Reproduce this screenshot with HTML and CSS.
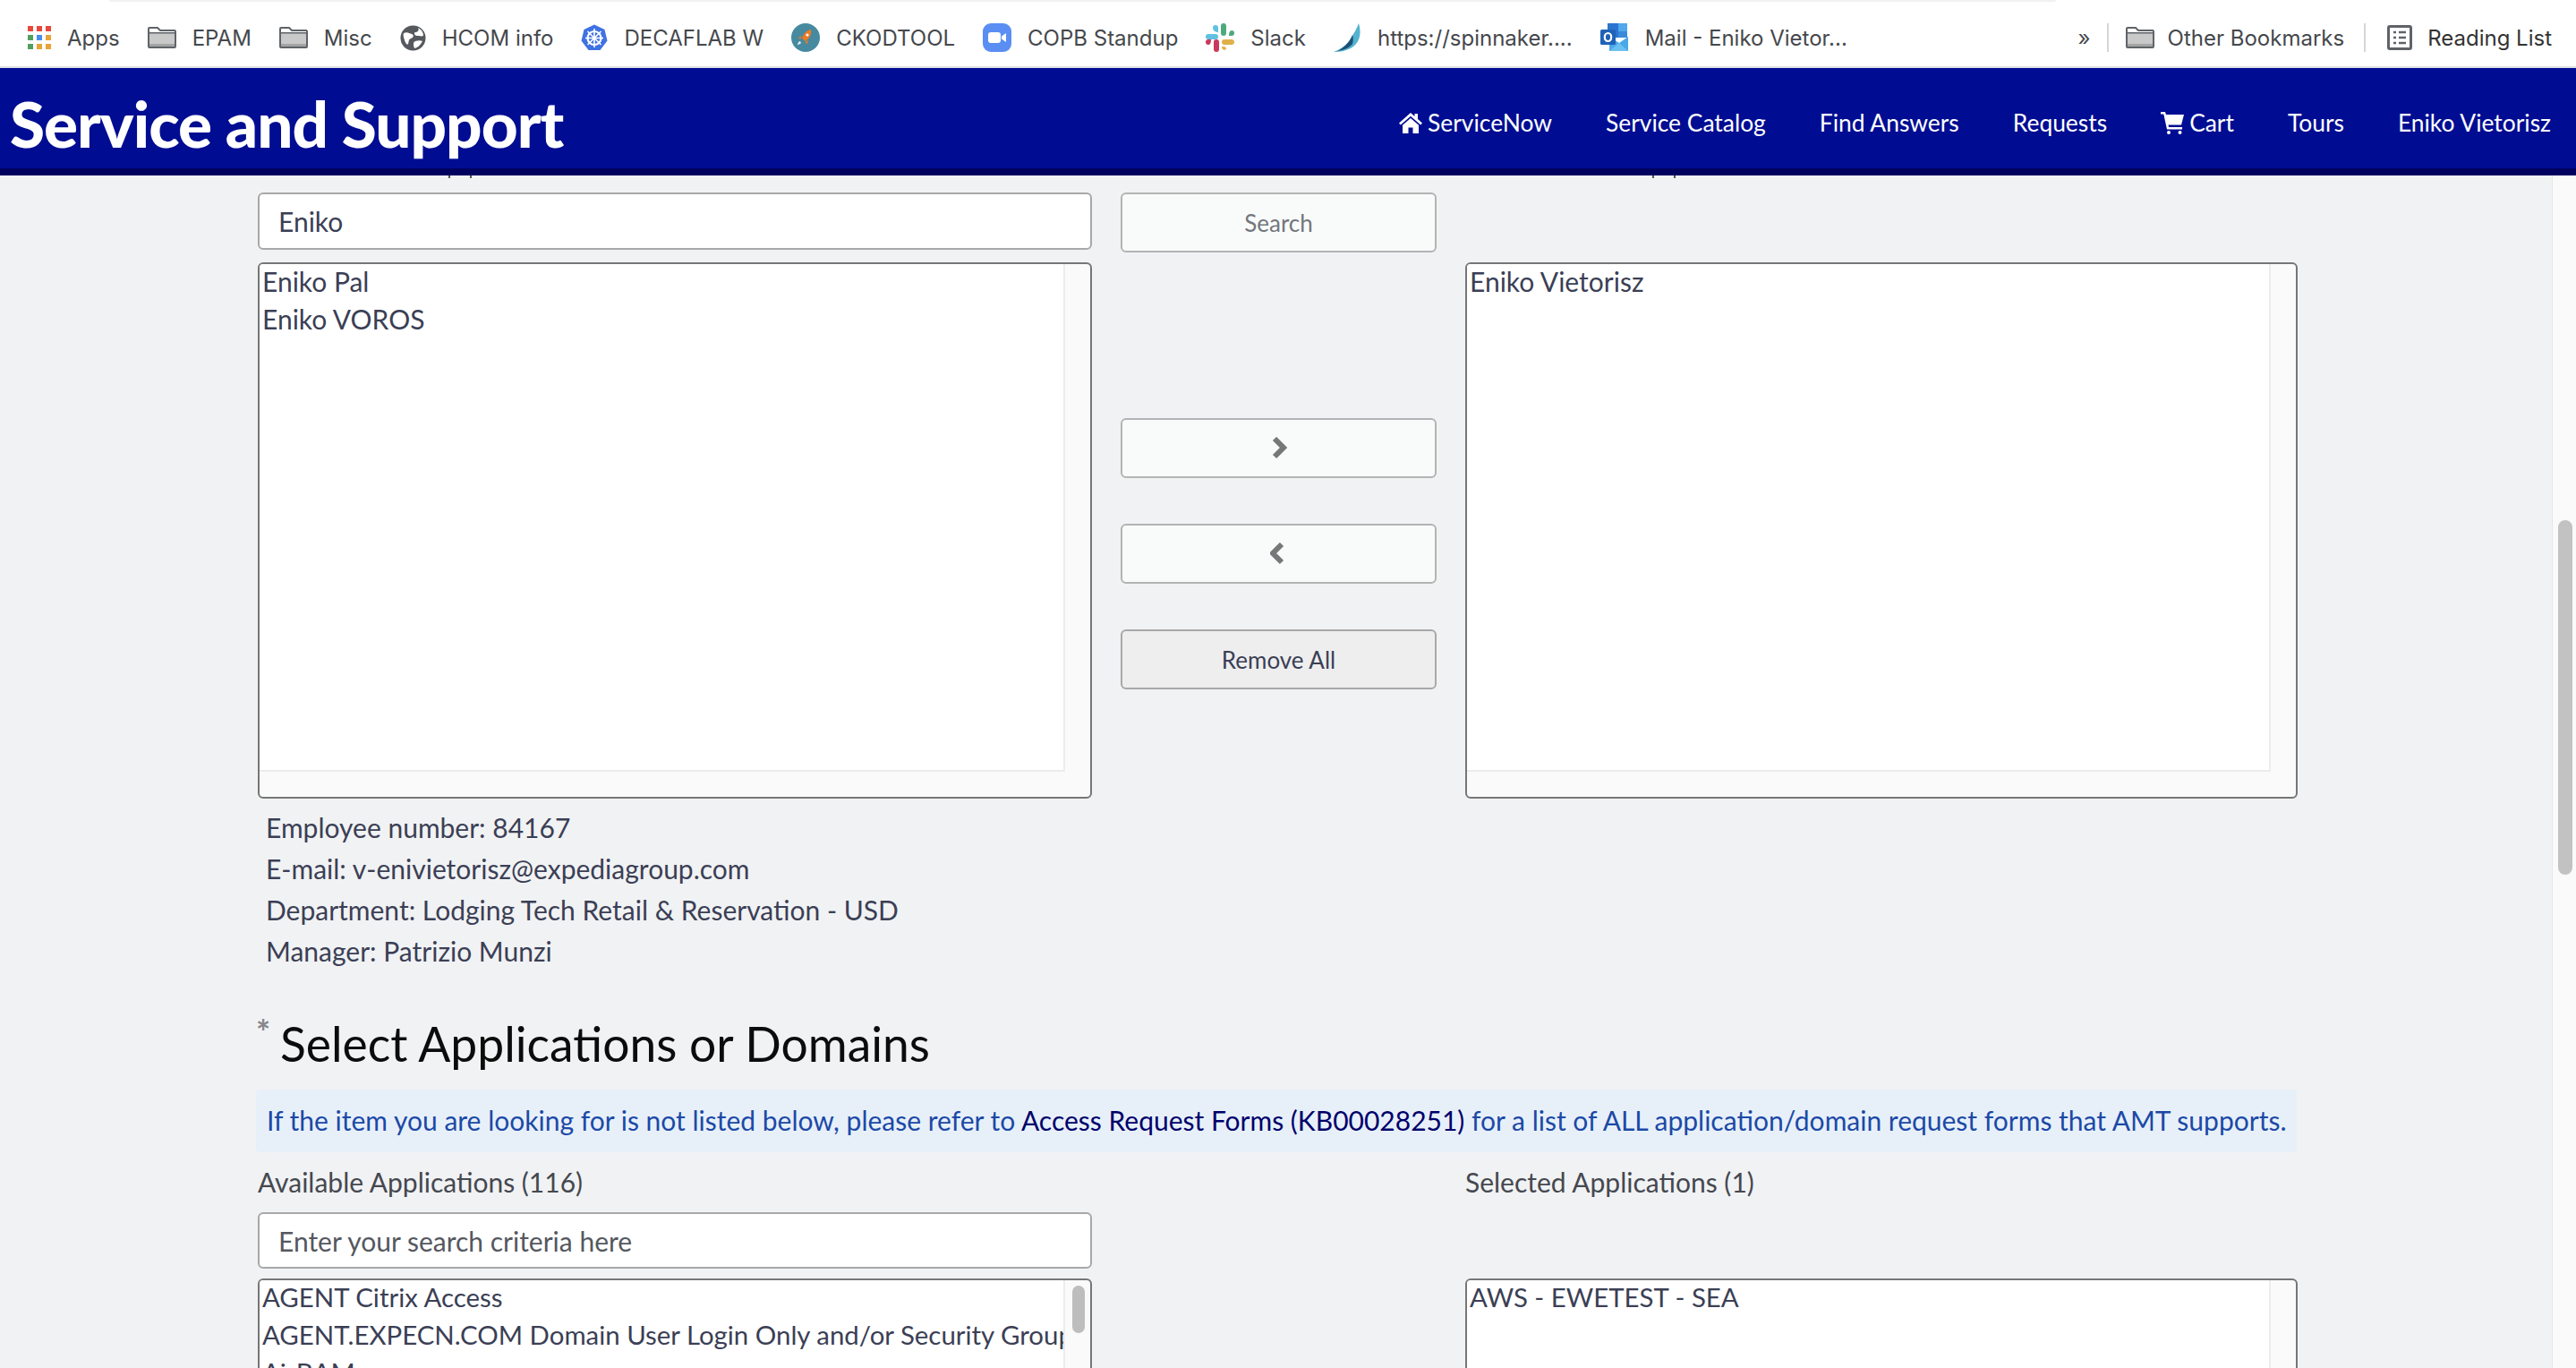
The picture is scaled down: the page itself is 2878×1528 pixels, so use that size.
FILE: index.html
```html
<!DOCTYPE html>
<html lang="en">
<head>
    <meta charset="UTF-8">
    <meta name="viewport" content="width=device-width, initial-scale=1.0">
    <title>Service and Support</title>
    <link rel="stylesheet" href="styles.css">
</head>
<body>
    <svg class="sprites" width="0" height="0">
        <symbol id="folder" viewBox="0 0 32 24">
            <path d="M2 1h9l3 3h16a1.500 1.500 0 0 1 1 1v17a1 1 0 0 1-1 1H2a1 1 0 0 1-1-1V2a1 1 0 0 1 1-1z" fill="#fff" stroke="#5f6368" stroke-width="2"/>
            <rect x="2" y="7" width="28" height="15" fill="#c9c9c9"/>
            <rect x="2" y="19" width="28" height="3" fill="#a4a4a4"/>
            <rect x="2" y="6" width="28" height="1.500" fill="#5f6368"/>
        </symbol>
    </svg>

    <div class="page">
        <!-- Bookmarks bar -->
        <div class="bookmarks">
            <div class="bookmarks-edge"></div>
            <div class="bookmarks-row">
                <a class="bm">
                    <svg class="bm-icon" width="26" height="26" viewBox="0 0 26 26">
                        <rect x="0" y="0" width="6" height="6" fill="#e8483c"/><rect x="10" y="0" width="6" height="6" fill="#e8483c"/><rect x="20" y="0" width="6" height="6" fill="#e8483c"/>
                        <rect x="0" y="10" width="6" height="6" fill="#52a05f"/><rect x="10" y="10" width="6" height="6" fill="#4a8df0"/><rect x="20" y="10" width="6" height="6" fill="#e8a437"/>
                        <rect x="0" y="20" width="6" height="6" fill="#52a05f"/><rect x="10" y="20" width="6" height="6" fill="#e8a437"/><rect x="20" y="20" width="6" height="6" fill="#e8a437"/>
                    </svg>
                    Apps
                </a>
                <a class="bm"><svg class="bm-icon" width="32" height="24"><use href="#folder"/></svg>EPAM</a>
                <a class="bm"><svg class="bm-icon" width="32" height="24"><use href="#folder"/></svg>Misc</a>
                <a class="bm">
                    <svg class="bm-icon" width="29" height="29" viewBox="0 0 29 29">
                        <circle cx="14.500" cy="14.500" r="14" fill="#55585d"/>
                        <path d="M4 9c4-2 6 0 9 1s2 4-1 5-2 4-3 6-3-1-4-4-2-6-1-8zM20 3c2 3-1 5-3 5s-1 4 2 4 4 1 7 0c0-4-2-7-6-9zM17 18c3-1 6-1 8 0-2 4-5 7-9 8-1-3-2-7 1-8z" fill="#fff"/>
                    </svg>
                    HCOM info
                </a>
                <a class="bm">
                    <svg class="bm-icon" width="30" height="30" viewBox="0 0 30 30">
                        <path d="M15 .5l11.500 5.500 3 12.500-8 10.500H8.500l-8-10.500 3-12.500z" fill="#3f72e2"/>
                        <g fill="none" stroke="#fff">
                            <circle cx="15" cy="15.500" r="7.500" stroke-width="2.200"/>
                            <path d="M15 5v21M5 15.500h20M7.500 8l15 15M22.500 8l-15 15" stroke-width="1.600"/>
                        </g>
                    </svg>
                    DECAFLAB W
                </a>
                <a class="bm">
                    <svg class="bm-icon" width="32" height="32" viewBox="0 0 32 32">
                        <circle cx="16" cy="16" r="16" fill="#478aa0"/>
                        <path d="M22 7c1 5-1 9-6 13l-4-3c2-6 5-9 10-10z" fill="#ea7b25"/>
                        <path d="M12 14l-4 2 2 2zM19 19l-1 4-3-2z" fill="#ea7b25"/>
                        <circle cx="18" cy="13" r="1.600" fill="#fff"/>
                        <path d="M9 20c1 0 2 1 2 2-1 1-3 2-4 2 0-1 1-3 2-4z" fill="#dfeef2"/>
                    </svg>
                    CKODTOOL
                </a>
                <a class="bm">
                    <svg class="bm-icon" width="32" height="32" viewBox="0 0 32 32">
                        <rect width="32" height="32" rx="9" fill="#5a8ef2"/>
                        <rect x="6" y="10" width="14" height="12" rx="3" fill="#fff"/>
                        <path d="M21 14.500l5-3.500v10l-5-3.500z" fill="#fff"/>
                    </svg>
                    COPB Standup
                </a>
                <a class="bm">
                    <svg class="bm-icon" width="32" height="32" viewBox="0 0 32 32">
                        <rect x="0" y="12" width="14" height="6" rx="3" fill="#62c0e0"/>
                        <path d="M14 10V5a3 3 0 0 0-6 0c0 3 3 5 6 5z" fill="#62c0e0"/>
                        <rect x="17" y="0" width="6" height="14" rx="3" fill="#4eaa7e"/>
                        <path d="M26 14h3a3 3 0 0 0 0-6c-2 0-3 2-3 6z" fill="#4eaa7e"/>
                        <rect x="18" y="18" width="14" height="6" rx="3" fill="#e0b14a"/>
                        <path d="M18 27v-1h2a3 3 0 0 1 3 3 3 3 0 0 1-5-2z" fill="#e0b14a"/>
                        <rect x="9" y="18" width="6" height="14" rx="3" fill="#c9395b"/>
                        <path d="M6 18H3a3 3 0 0 0 0 6c2 0 3-2 3-6z" fill="#c9395b"/>
                    </svg>
                    Slack
                </a>
                <a class="bm">
                    <svg class="bm-icon" width="31" height="32" viewBox="0 0 31 32">
                        <path d="M28 0c3 10 2 20-6 26-7 5-15 6-22 6 8-3 15-8 19-15 3-5 7-11 9-17z" fill="#53b3cf"/>
                        <path d="M21 13c-3 8-9 14-17 18 7-1 13-3 17-8 1-3 1-7 0-10z" fill="#1d4f73"/>
                    </svg>
                    https://spinnaker....
                </a>
                <a class="bm">
                    <svg class="bm-icon" width="32" height="32" viewBox="0 0 32 32">
                        <rect x="8" y="0" width="20" height="16" fill="#2a75cf"/>
                        <rect x="20" y="0" width="10" height="9" fill="#50a8ea"/>
                        <rect x="20" y="9" width="10" height="7" fill="#3a8adc"/>
                        <path d="M10 15l11 7 10-7v16H10z" fill="#4aa8e8"/>
                        <path d="M10 31l11-9 10 9z" fill="#6cc0f0"/>
                        <rect x="0" y="7" width="17" height="17" rx="1.500" fill="#1f62b8"/>
                        <ellipse cx="8.500" cy="15.500" rx="3.700" ry="4.500" fill="none" stroke="#fff" stroke-width="2.200"/>
                    </svg>
                    Mail - Eniko Vietor...
                </a>
                <span class="bm-more">»</span>
                <span class="bm-sep"></span>
                <a class="bm bm-other"><svg class="bm-icon" width="32" height="24"><use href="#folder"/></svg>Other Bookmarks</a>
                <span class="bm-sep"></span>
                <a class="bm bm-reading">
                    <svg class="bm-icon" width="28" height="28" viewBox="0 0 28 28">
                        <rect x="1.500" y="1.500" width="25" height="25" rx="1.500" fill="#fff" stroke="#5f6368" stroke-width="3"/>
                        <path d="M7 8h3M13 8h8M7 14h3M13 14h8M7 20h3M13 20h8" stroke="#5f6368" stroke-width="2.500"/>
                    </svg>
                    Reading List
                </a>
            </div>
        </div>

        <!-- Portal header -->
        <header class="site-nav">
            <a class="logo">Service and Support</a>
            <nav class="nav-links">
                <a>
                    <svg width="26" height="24" viewBox="0 0 26 24">
                        <path d="M13 1L0 12.500l1.800 2L13 4.700l11.200 9.800 1.800-2-5-4.400V2h-3.500v3z" fill="#fff"/>
                        <path d="M13 7L4 14.800V24h6.500v-6.500h5V24H22v-9.200z" fill="#fff"/>
                    </svg>
                    ServiceNow
                </a>
                <a>Service Catalog</a>
                <a>Find Answers</a>
                <a>Requests</a>
                <a>
                    <svg width="26" height="25" viewBox="0 0 26 25">
                        <path d="M0 0h5l1 3h20l-3 11.500H8.500l.5 2.500h15v2.500H7L3.300 2.500H0z" fill="#fff"/>
                        <circle cx="9" cy="23" r="2" fill="#fff"/>
                        <circle cx="21.500" cy="23" r="2" fill="#fff"/>
                    </svg>
                    Cart
                </a>
                <a>Tours</a>
                <a>Eniko Vietorisz</a>
            </nav>
        </header>

        <div class="body-row">
            <main class="content">
                <div class="clipped-labels">
                    <span></span><span></span>
                    <span class="clipped-right"></span><span></span>
                </div>

                <!-- User picker -->
                <section class="picker">
                    <input class="search-input" type="text" value="Eniko">
                    <button class="btn btn-search">Search</button>
                    <div class="listbox picker-list-left">
                        <div class="listbox-items">
                            <div>Eniko Pal</div>
                            <div>Eniko VOROS</div>
                        </div>
                        <div class="gutter-y"></div>
                        <div class="gutter-x"></div>
                    </div>
                    <div class="picker-actions">
                        <button class="btn" aria-label="Add">
                            <svg width="20" height="26" viewBox="0 0 20 26"><path d="M5 2l10 10L5 22" fill="none" stroke="#757878" stroke-width="6"/></svg>
                        </button>
                        <button class="btn" aria-label="Remove">
                            <svg width="20" height="26" viewBox="0 0 20 26"><path d="M13 2L3 12l10 10" fill="none" stroke="#757878" stroke-width="6"/></svg>
                        </button>
                        <button class="btn btn-grey">Remove All</button>
                    </div>
                    <div class="listbox picker-list-right">
                        <div class="listbox-items">
                            <div>Eniko Vietorisz</div>
                        </div>
                        <div class="gutter-y"></div>
                        <div class="gutter-x"></div>
                    </div>
                </section>

                <div class="employee-info">
                    <div>Employee number: 84167</div>
                    <div>E-mail: v-enivietorisz@expediagroup.com</div>
                    <div>Department: Lodging Tech Retail &amp; Reservation - USD</div>
                    <div>Manager: Patrizio Munzi</div>
                </div>

                <h2 class="section-title"><span class="required">*</span>Select Applications or Domains</h2>

                <div class="notice">If the item you are looking for is not listed below, please refer to <a>Access Request Forms (KB00028251)</a> for a list of ALL application/domain request forms that AMT supports.</div>

                <!-- Application picker -->
                <section class="apps">
                    <label class="apps-label">Available Applications (116)</label>
                    <label class="apps-label apps-right">Selected Applications (1)</label>
                    <input class="search-input apps-search" type="text" placeholder="Enter your search criteria here">
                    <div class="listbox apps-list">
                        <div class="listbox-items">
                            <div>AGENT Citrix Access</div>
                            <div>AGENT.EXPECN.COM Domain User Login Only and/or Security Group</div>
                            <div>Ai-BAM</div>
                        </div>
                        <div class="gutter-y"><div class="list-thumb"></div></div>
                    </div>
                    <div class="listbox apps-list apps-right">
                        <div class="listbox-items">
                            <div>AWS - EWETEST - SEA</div>
                        </div>
                        <div class="gutter-y"></div>
                    </div>
                </section>
            </main>

            <div class="page-scrollbar"><div class="page-thumb"></div></div>
        </div>
    </div>
</body>
</html>
```

FILE: styles.css
```css
* {
    box-sizing: border-box;
}
body {
    margin: 0;
    font-family: Lato, "Noto Sans", sans-serif;
    font-size: 30px;
    color: #3b3f55;
    background-color: #f1f2f4;
}
.sprites {
    position: absolute;
}
.page {
    height: 100vh;
    display: flex;
    flex-direction: column;
    overflow: hidden;
}

/* bookmarks bar */
.bookmarks {
    height: 76px;
    flex: none;
    background-color: #fff;
    border-bottom: 2px solid #e0e0e0;
}
.bookmarks-edge {
    height: 2px;
    margin: 0 581px 0 122px;
    background-color: #f1f1f1;
    border-radius: 0 0 6px 6px;
}
.bookmarks-row {
    height: 72px;
    padding: 8px 27px 0 31px;
    display: flex;
    align-items: center;
    gap: 31px;
    font-family: Inter, "Liberation Sans", sans-serif;
    font-size: 24px;
    color: #45484c;
    white-space: nowrap;
}
.bm {
    display: flex;
    align-items: center;
    gap: 18px;
}
.bm-icon {
    flex: none;
}
.bm-more {
    margin-left: auto;
    margin-right: -13px;
}
.bm-sep {
    width: 2px;
    height: 32px;
    background-color: #d6d6d6;
}
.bm-other {
    gap: 15px;
    margin-left: -12px;
    margin-right: -9px;
}
.bm-reading {
    gap: 17px;
    margin-left: -7px;
    color: #333;
}

/* portal header */
.site-nav {
    height: 120px;
    flex: none;
    padding: 10px 28px 0 11px;
    display: flex;
    align-items: center;
    justify-content: space-between;
    background-color: #000d92;
    border-bottom: 8px solid #00005f;
    color: #fff;
}
.logo {
    font-size: 71px;
    font-weight: 900;
    letter-spacing: -1px;
}
.nav-links {
    display: flex;
    gap: 60px;
    align-items: center;
    font-size: 26.400px;
}
.nav-links a {
    display: flex;
    align-items: center;
    gap: 6px;
}

/* main */
.body-row {
    flex: 1;
    min-height: 0;
    display: flex;
}
.content {
    flex: 1;
    min-width: 0;
    overflow: hidden;
}
.page-scrollbar {
    width: 27px;
    flex: none;
    padding: 385px 4px 0 6px;
    background-color: #fafafa;
    border-left: 1px solid #e6e6e6;
}
.page-thumb {
    height: 396px;
    background-color: #c2c2c2;
    border-radius: 8px;
}
.clipped-labels {
    height: 3px;
    margin-bottom: 16px;
    padding-left: 501px;
    display: flex;
    gap: 22px;
}
.clipped-labels span {
    width: 2px;
    background-color: #555;
}
.clipped-labels .clipped-right {
    margin-left: 1297px;
}

.picker, .apps {
    display: grid;
    grid-template-columns: 932px 353px 930px;
    column-gap: 32px;
    margin-left: 288px;
}
.picker {
    grid-template-rows: 64px 599px;
    row-gap: 14px;
}
.picker-list-left {
    grid-column: 1;
    grid-row: 2;
}
.picker-list-right {
    grid-column: 3;
    grid-row: 2;
}
.picker-actions {
    grid-column: 2;
    grid-row: 2;
    padding-top: 174px;
    display: flex;
    flex-direction: column;
    gap: 51px;
}

.search-input {
    display: block;
    width: 100%;
    height: 64px;
    padding: 0 21px;
    font: inherit;
    color: #3b3f55;
    background-color: #fff;
    border: 2px solid #a8a8a8;
    border-radius: 6px;
    outline: none;
}
.search-input::placeholder {
    color: #55585f;
    opacity: 1;
}
.btn {
    height: 67px;
    width: 100%;
    display: flex;
    align-items: center;
    justify-content: center;
    font-family: inherit;
    font-size: 26px;
    color: #3b3f55;
    background-color: #f9fbfb;
    border: 2px solid #b2b4b4;
    border-radius: 6px;
    padding: 0;
}
.btn-search {
    color: #73767c;
}
.btn-grey {
    background-color: #eeeeef;
    border-color: #a8a8a8;
}

.listbox {
    display: grid;
    grid-template-columns: 1fr 28px;
    grid-template-rows: 1fr 28px;
    background-color: #fafafa;
    border: 2px solid #767676;
    border-radius: 6px;
    overflow: hidden;
}
.listbox-items {
    padding: 0 3px;
    background-color: #fff;
    line-height: 42px;
    white-space: nowrap;
    overflow: hidden;
    border-right: 2px solid #ececec;
    border-bottom: 2px solid #ececec;
}
.listbox-items div:first-child {
    margin-top: -2px;
}
.gutter-y {
    padding: 6px 6px 0 8px;
}
.gutter-x {
    grid-column: 1 / -1;
}
.list-thumb {
    height: 53px;
    background-color: #bdbdbd;
    border-radius: 8px;
}

.employee-info {
    margin: 9px 0 0 297px;
    line-height: 46px;
}
.section-title {
    margin: 45px 0 0 286px;
    height: 70px;
    display: flex;
    font-size: 53.400px;
    font-weight: 400;
    line-height: 70px;
    color: #0c0c0c;
}
.required {
    width: 27px;
    font-size: 38px;
    font-weight: 700;
    line-height: 44px;
    color: #85878b;
}
.notice {
    height: 70px;
    width: 2280px;
    margin: 17px 0 0 286px;
    padding: 0 12px;
    line-height: 68px;
    color: #1c49a6;
    background-color: #e7f0f9;
    border-radius: 4px;
    white-space: nowrap;
}
.notice a {
    color: #00006b;
}
.apps {
    grid-template-rows: 46px 63px 300px;
    row-gap: 11px;
    margin-top: 10px;
}
.apps-label {
    color: #45484f;
    grid-row: 1;
    line-height: 46px;
}
.apps-right {
    grid-column: 3;
}
.apps-search {
    grid-column: 1;
    grid-row: 2;
    height: 63px;
}
.apps-list {
    grid-row: 3;
    font-size: 29.400px;
}
```
